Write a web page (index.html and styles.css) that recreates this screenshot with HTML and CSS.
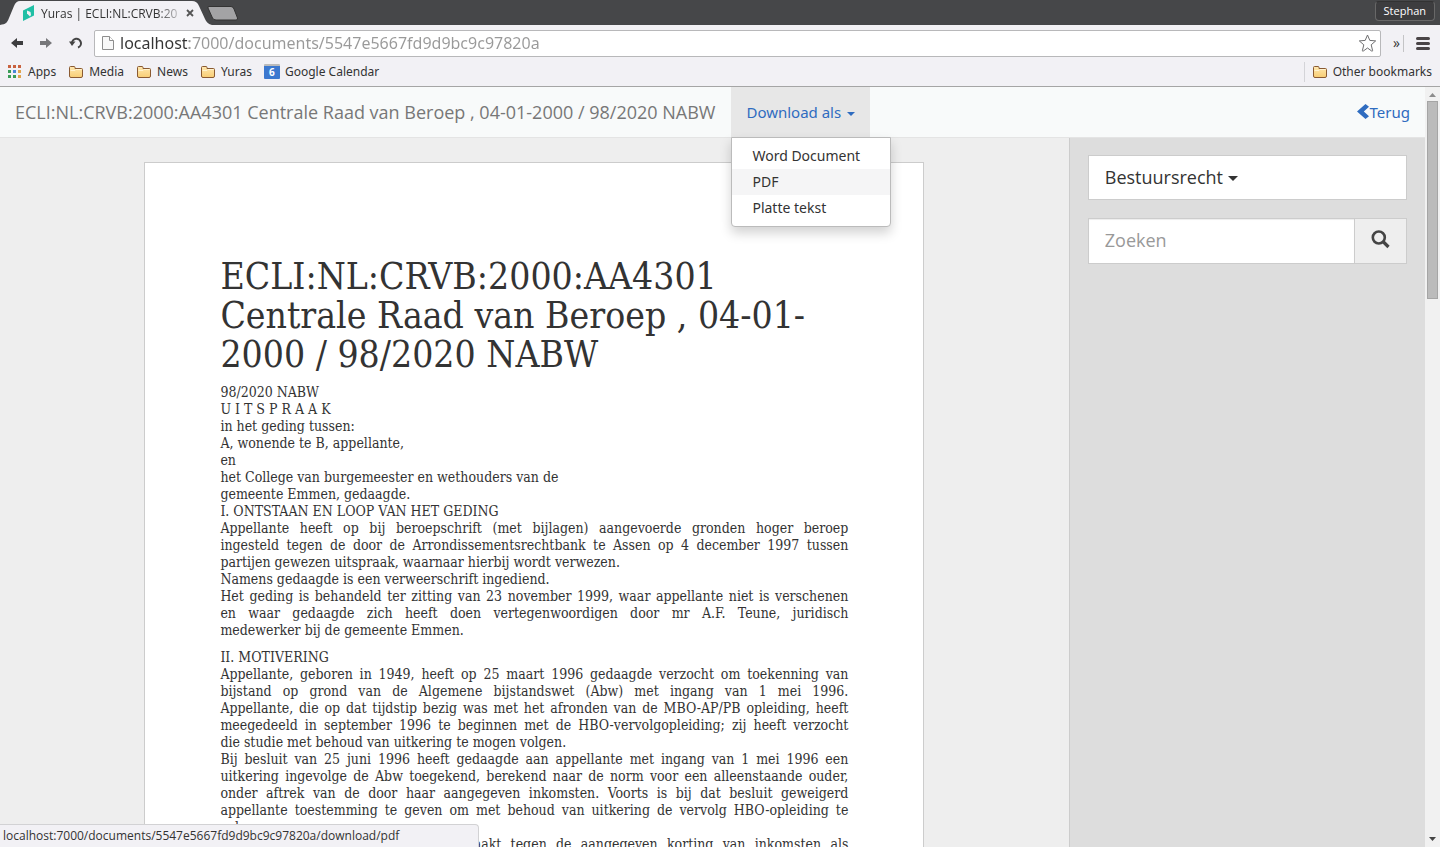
FILE: index.html
```html
<!DOCTYPE html>
<html lang="nl">
<head>
<meta charset="utf-8">
<title>Yuras | ECLI:NL:CRVB:2000:AA4301</title>
<link rel="stylesheet" href="styles.css">
</head>
<body>
<svg class="defs" aria-hidden="true">
  <defs>
    <linearGradient id="folder-fill" x1="0" y1="0" x2="0" y2="1">
      <stop offset="0" stop-color="#ffe8b0"/><stop offset="1" stop-color="#f8cd74"/>
    </linearGradient>
    <symbol id="folder" viewBox="0 0 16 14">
      <path d="M1.500 11V2.500q0-1 1-1H6q1 0 1 1V3.500h6.500q1 0 1 1V11q0 1.500-1.500 1.500H3Q1.500 12.500 1.500 11z" fill="url(#folder-fill)" stroke="#8a5a32"/>
      <path d="M2.500 5.500H7l1-1h5.500" fill="none" stroke="#fff3d0"/>
    </symbol>
  </defs>
</svg>
<div class="browser">
  <div class="tabstrip">
    <div class="tab">
      <svg class="tab-shape" viewBox="0 0 212 25" aria-hidden="true"><path d="M0 25C6 24 7 23 9 18L14 6Q16 1 20 1H192Q197 1 199 6L205 19Q207 24 212 25z" fill="#f2f1f5"/></svg>
      <svg class="favicon" viewBox="0 0 12 16" aria-hidden="true"><path d="M0 5.500L11 0V10.500L0 16z" fill="#20bfa5"/><path d="M4 5.500l3.500 1.500.5 3-1 1.500-3-3z" fill="#f2f1f5"/></svg>
      <span class="tab-title">Yuras | ECLI:NL:CRVB:20</span>
      <button class="plain close" aria-label="Close tab"><svg width="8" height="8" viewBox="0 0 8 8"><path d="M1 1l6 6M7 1L1 7" stroke="#555" stroke-width="1.800"/></svg></button>
    </div>
    <button class="plain new-tab" aria-label="New tab"><svg width="32" height="15" viewBox="0 0 32 15"><path d="M2 .5H24Q26 .5 27 3L30.500 12Q31 14 29 14H9Q6.500 14 5.500 12L1 2Q.500 .5 2 .5z" fill="#a3a3a5" stroke="#333"/></svg></button>
    <button class="profile">Stephan</button>
  </div>
  <div class="toolbar">
    <button class="plain nav" aria-label="Back"><svg width="12" height="12" viewBox="0 0 12 12"><path d="M0 6l6-5v3h6v4H6v3z" fill="#3d3d3f"/></svg></button>
    <button class="plain nav" aria-label="Forward"><svg width="12" height="12" viewBox="0 0 12 12"><path d="M12 6L6 1v3H0v4h6v3z" fill="#77777a"/></svg></button>
    <button class="plain nav" aria-label="Reload"><svg width="14" height="12" viewBox="0 0 14 12"><path d="M3 6.500A4.500 4.500 0 1 1 9 10.500" fill="none" stroke="#444" stroke-width="2"/><path d="M0 4.500h6.500L3 9z" fill="#444"/></svg></button>
    <div class="omnibox">
      <svg width="12" height="16" viewBox="0 0 12 16" aria-hidden="true"><path d="M.5 1.500h7l4 4v9H.500z" fill="#f8f8f8" stroke="#8d8d8d"/><path d="M7.500 1.500v4h4" fill="#fff" stroke="#8d8d8d"/></svg>
      <input class="url" type="text" aria-label="Address" value="localhost:7000/documents/5547e5667fd9d9bc9c97820a">
      <button class="plain" aria-label="Bookmark this page"><svg width="19" height="18" viewBox="0 0 19 18"><path d="M9.500 1l2.300 5.400 5.900.5-4.500 3.900 1.400 5.800q0 .8-.8.500L9.500 14l-4.300 3.100q-.9.300-.8-.5l1.400-5.800L1.300 6.900l5.900-.5z" fill="#fff" stroke="#6e6e70" stroke-linejoin="round"/></svg></button>
    </div>
    <button class="plain more" aria-label="More extensions">»</button>
    <button class="plain menu" aria-label="Menu"><svg width="14" height="13" viewBox="0 0 14 13"><path d="M1.500 1.500h11M1.500 6.500h11M1.500 11.500h11" stroke="#4a4547" stroke-width="3" stroke-linecap="round"/></svg></button>
  </div>
  <nav class="bookmarks" aria-label="Bookmarks">
    <a href="#"><svg width="14" height="13" viewBox="0 0 14 13"><path d="M0 0h3v3H0zM5 0h3v3H5zM10 0h3v3h-3z" fill="#c9623f"/><path d="M0 5h3v3H0zM0 10h3v3H0zM5 10h3v3H5z" fill="#3a9c57"/><path d="M5 5h3v3H5z" fill="#4a86d8"/><path d="M10 5h3v3h-3zM10 10h3v3h-3z" fill="#e0a34d"/></svg>Apps</a>
    <a href="#"><svg width="16" height="14"><use href="#folder"/></svg>Media</a>
    <a href="#"><svg width="16" height="14"><use href="#folder"/></svg>News</a>
    <a href="#"><svg width="16" height="14"><use href="#folder"/></svg>Yuras</a>
    <a href="#"><span class="calendar">6</span>Google Calendar</a>
    <a href="#" class="other"><svg width="16" height="14"><use href="#folder"/></svg>Other bookmarks</a>
  </nav>

  <div class="viewport">
    <div class="app">
      <header class="navbar">
        <span class="brand">ECLI:NL:CRVB:2000:AA4301 Centrale Raad van Beroep , 04-01-2000 / 98/2020 NABW</span>
        <div class="dropdown">
          <button class="plain dropdown-toggle" aria-expanded="true">Download als <span class="caret"></span></button>
          <div class="dropdown-menu">
            <a href="#">Word Document</a>
            <a href="#" class="active">PDF</a>
            <a href="#">Platte tekst</a>
          </div>
        </div>
        <a class="back" href="#"><svg width="12" height="15" viewBox="0 0 12 15" aria-hidden="true"><path d="M8.500 0L12 2.800 6.800 7.500 12 12.200 8.500 15 0 7.500z" fill="#2f6cc0"/></svg>Terug</a>
      </header>
      <div class="columns">
        <main class="reader">
          <article class="paper">
            <h1>ECLI:NL:CRVB:2000:AA4301<br>Centrale Raad van Beroep , 04-01-<br>2000 / 98/2020 NABW</h1>
            <p>98/2020 NABW<br>U I T S P R A A K<br>in het geding tussen:<br>A, wonende te B, appellante,<br>en<br>het College van burgemeester en wethouders van de<br>gemeente Emmen, gedaagde.<br>I. ONTSTAAN EN LOOP VAN HET GEDING<br>
              <span class="full">Appellante heeft op bij beroepschrift (met bijlagen) aangevoerde gronden hoger beroep</span>
              <span class="full">ingesteld tegen de door de Arrondissementsrechtbank te Assen op 4 december 1997 tussen</span>
              partijen gewezen uitspraak, waarnaar hierbij wordt verwezen.<br>Namens gedaagde is een verweerschrift ingediend.<br>
              <span class="full">Het geding is behandeld ter zitting van 23 november 1999, waar appellante niet is verschenen</span>
              <span class="full">en waar gedaagde zich heeft doen vertegenwoordigen door mr A.F. Teune, juridisch</span>
              medewerker bij de gemeente Emmen.</p>
            <p>II. MOTIVERING<br>
              <span class="full">Appellante, geboren in 1949, heeft op 25 maart 1996 gedaagde verzocht om toekenning van</span>
              <span class="full">bijstand op grond van de Algemene bijstandswet (Abw) met ingang van 1 mei 1996.</span>
              <span class="full">Appellante, die op dat tijdstip bezig was met het afronden van de MBO-AP/PB opleiding, heeft</span>
              <span class="full">meegedeeld in september 1996 te beginnen met de HBO-vervolgopleiding; zij heeft verzocht</span>
              die studie met behoud van uitkering te mogen volgen.<br>
              <span class="full">Bij besluit van 25 juni 1996 heeft gedaagde aan appellante met ingang van 1 mei 1996 een</span>
              <span class="full">uitkering ingevolge de Abw toegekend, berekend naar de norm voor een alleenstaande ouder,</span>
              <span class="full">onder aftrek van de door haar aangegeven inkomsten. Voorts is bij dat besluit geweigerd</span>
              <span class="full">appellante toestemming te geven om met behoud van uitkering de vervolg HBO-opleiding te</span>
              volgen.<br>
              <span class="full">Appellante heeft tijdig bezwaar gemaakt tegen de aangegeven korting van inkomsten als</span></p>
          </article>
        </main>
        <aside class="sidebar">
          <button class="filter">Bestuursrecht <span class="caret"></span></button>
          <form class="search">
            <input type="text" placeholder="Zoeken" aria-label="Zoeken">
            <button type="button" aria-label="Zoek"><svg width="19" height="19" viewBox="0 0 19 19"><circle cx="7.800" cy="7.500" r="6" fill="none" stroke="#444" stroke-width="2.600"/><path d="M12 11.500l5.500 5.500" stroke="#444" stroke-width="3.200"/></svg></button>
          </form>
        </aside>
      </div>
    </div>
    <div class="scrollbar" aria-hidden="true">
      <svg width="7" height="4" viewBox="0 0 7 4"><path d="M0 4L3.500 0 7 4z" fill="#8c8c8c"/></svg>
      <div class="track"><div class="thumb"></div></div>
      <svg width="7" height="4" viewBox="0 0 7 4"><path d="M0 0L3.500 4 7 0z" fill="#444"/></svg>
    </div>
  </div>
  <div class="status">localhost:7000/documents/5547e5667fd9d9bc9c97820a/download/pdf</div>
</div>
</body>
</html>
```
FILE: styles.css
```css
* { box-sizing: border-box; }
body { margin: 0; font-family: "Open Sans", sans-serif; color: #333; }
a { text-decoration: none; color: inherit; }
button, input { font: inherit; color: inherit; margin: 0; }
svg { display: block; flex: none; }
.defs { position: absolute; width: 0; height: 0; }
.plain { border: 0; background: none; padding: 0; }

.browser { position: relative; display: flex; flex-direction: column; height: 100vh; overflow: hidden; background: #f2f1f5; }
.tabstrip { display: flex; height: 25px; flex: none; background: #464749; font-size: 12px; }
.tab { position: relative; display: flex; align-items: center; width: 212px; padding: 1px 17px 0 23px; }
.tab-shape { position: absolute; top: 0; left: 0; width: 212px; height: 25px; }
.favicon { position: relative; width: 12px; height: 16px; margin-right: 6px; }
.tab-title { position: relative; flex: none; width: 141px; white-space: nowrap; -webkit-mask-image: linear-gradient(to right, #000 116px, transparent 145px); mask-image: linear-gradient(to right, #000 116px, transparent 145px); }
.close { position: relative; margin-left: 4px; }
.new-tab { align-self: flex-start; margin-top: 6px; margin-left: -5px; }
.profile { align-self: flex-start; height: 20px; margin: 1px 5px 0 auto; padding: 0 8px; border: 1px solid #686868; border-top-color: #333; border-radius: 4px; background: #3d3d3f; color: #fff; font-size: 11px; line-height: 18px; }

.toolbar { display: flex; align-items: center; flex: none; height: 36px; padding: 0 10px 0 11px; }
.nav { width: 12px; margin-right: 17px; }
.nav + .nav + .nav { width: 14px; margin-right: 11px; }
.omnibox { display: flex; align-items: center; flex: 1; height: 27px; padding: 0 3px 0 7px; border: 1px solid #b8b8ba; border-radius: 2px; background: #fff; }
.url { flex: 1; min-width: 0; height: 25px; padding: 0; margin-left: 6px; border: 0; outline: 0; font-family: "Noto Sans", sans-serif; font-size: 16px; background: linear-gradient(to right, #333 69px, #999 69px); -webkit-background-clip: text; background-clip: text; -webkit-text-fill-color: transparent; }
.more { height: 17px; margin-left: 12px; padding-right: 3px; border-right: 1px solid #c4c4c6; font-size: 14px; line-height: 14px; }
.menu { margin-left: 12px; }

.bookmarks { display: flex; align-items: center; gap: 12px; flex: none; height: 26px; padding: 0 8px 4px; border-bottom: 1px solid #a5a5a5; font-family: "Noto Sans", sans-serif; font-size: 12px; }
.bookmarks a { display: flex; align-items: center; gap: 5px; height: 20px; }
.bookmarks a:first-child { gap: 6px; }
.bookmarks .other { margin-left: auto; padding-left: 7px; border-left: 1px solid #d4d4d8; }
.calendar { width: 16px; height: 15px; border-top: 2px solid #bbb; border-radius: 1px; background: #3c78cf; color: #fff; font-size: 10px; font-weight: 700; line-height: 13px; text-align: center; }

.viewport { display: flex; flex: 1; min-height: 0; }
.app { display: flex; flex-direction: column; flex: 1; min-width: 0; }
.navbar { display: flex; flex: none; height: 51px; padding: 0 15px; border-bottom: 1px solid #e4e4e4; background: #f8fafa; line-height: 50px; }
.brand { padding-right: 16px; color: #777; font-size: 18px; white-space: nowrap; }
.dropdown { position: relative; font-family: "Noto Sans", sans-serif; font-size: 15px; color: #2f6cc0; }
.dropdown-toggle { display: block; height: 50px; padding: 0 15px; background: #e7e7e7; white-space: nowrap; }
.caret { display: inline-block; vertical-align: middle; border: 4px solid transparent; border-top-color: currentColor; border-bottom: 0; }
.dropdown-toggle .caret { margin-left: 2px; }
.dropdown-menu { position: absolute; z-index: 2; top: 50px; left: 0; width: 160px; padding: 5px 0; border: 1px solid #bbb; border-radius: 0 0 4px 4px; background: #fff; color: #333; font-size: 14px; line-height: 26px; box-shadow: 0 6px 12px rgba(0, 0, 0, .18); }
.dropdown-menu a { display: block; padding: 0 20px; }
.dropdown-menu .active { background: #f5f5f6; }
.back { display: flex; align-items: center; gap: 1px; margin-left: auto; color: #2f6cc0; font-family: "Noto Sans", sans-serif; font-size: 15px; }
.back svg { margin-bottom: 2px; }

.columns { display: flex; flex: 1; min-height: 0; }
.reader { width: 75%; padding-top: 24px; overflow: hidden; background: #eee; }
.paper { width: 780px; max-width: 100%; min-height: 100%; margin: 0 auto; padding: 94px 75px; border: 1px solid #ccc; background: #fff; font-family: "DejaVu Serif Condensed", "Liberation Serif", serif; font-size: 14px; line-height: 17px; }
.paper h1 { margin: 0 0 10px; font-size: 37px; font-weight: 400; line-height: 39px; white-space: nowrap; }
.paper p { margin: 0 0 10px; }
.full { display: block; text-align: justify; text-align-last: justify; }
.sidebar { width: 25%; padding: 17px 18px; border-left: 1px solid #ccc; background: #ddd; font-size: 18px; }
.filter { display: block; width: 100%; height: 45px; padding: 0 16px 2px; border: 1px solid #ccc; background: #fff; text-align: left; }
.filter .caret { border-width: 5px 5px 0; }
.search { display: flex; height: 46px; margin-top: 18px; }
.search input { flex: 1; min-width: 0; padding: 0 16px 2px; border: 1px solid #ccc; border-radius: 0; background: #fff; box-shadow: inset 0 1px 1px rgba(0, 0, 0, .075); }
.search input::placeholder { color: #999; }
.search button { width: 52px; padding: 0 0 4px 16px; border: 1px solid #ccc; border-left: 0; background: #eee; }

.scrollbar { display: flex; flex-direction: column; align-items: center; flex: none; width: 15px; padding: 6px 0; background: #f1f1f1; }
.track { flex: 1; width: 11px; padding: 4px 0; }
.thumb { height: 27%; border: 1px solid #a5a5a5; background: #bbb; }
.status { position: absolute; z-index: 3; bottom: 0; left: 0; width: 479px; height: 23px; padding: 0 3px; border: 1px solid #d2d2d4; border-width: 1px 1px 0 0; border-radius: 0 4px 0 0; background: #f2f1f5; font-size: 12px; line-height: 22px; }
```
